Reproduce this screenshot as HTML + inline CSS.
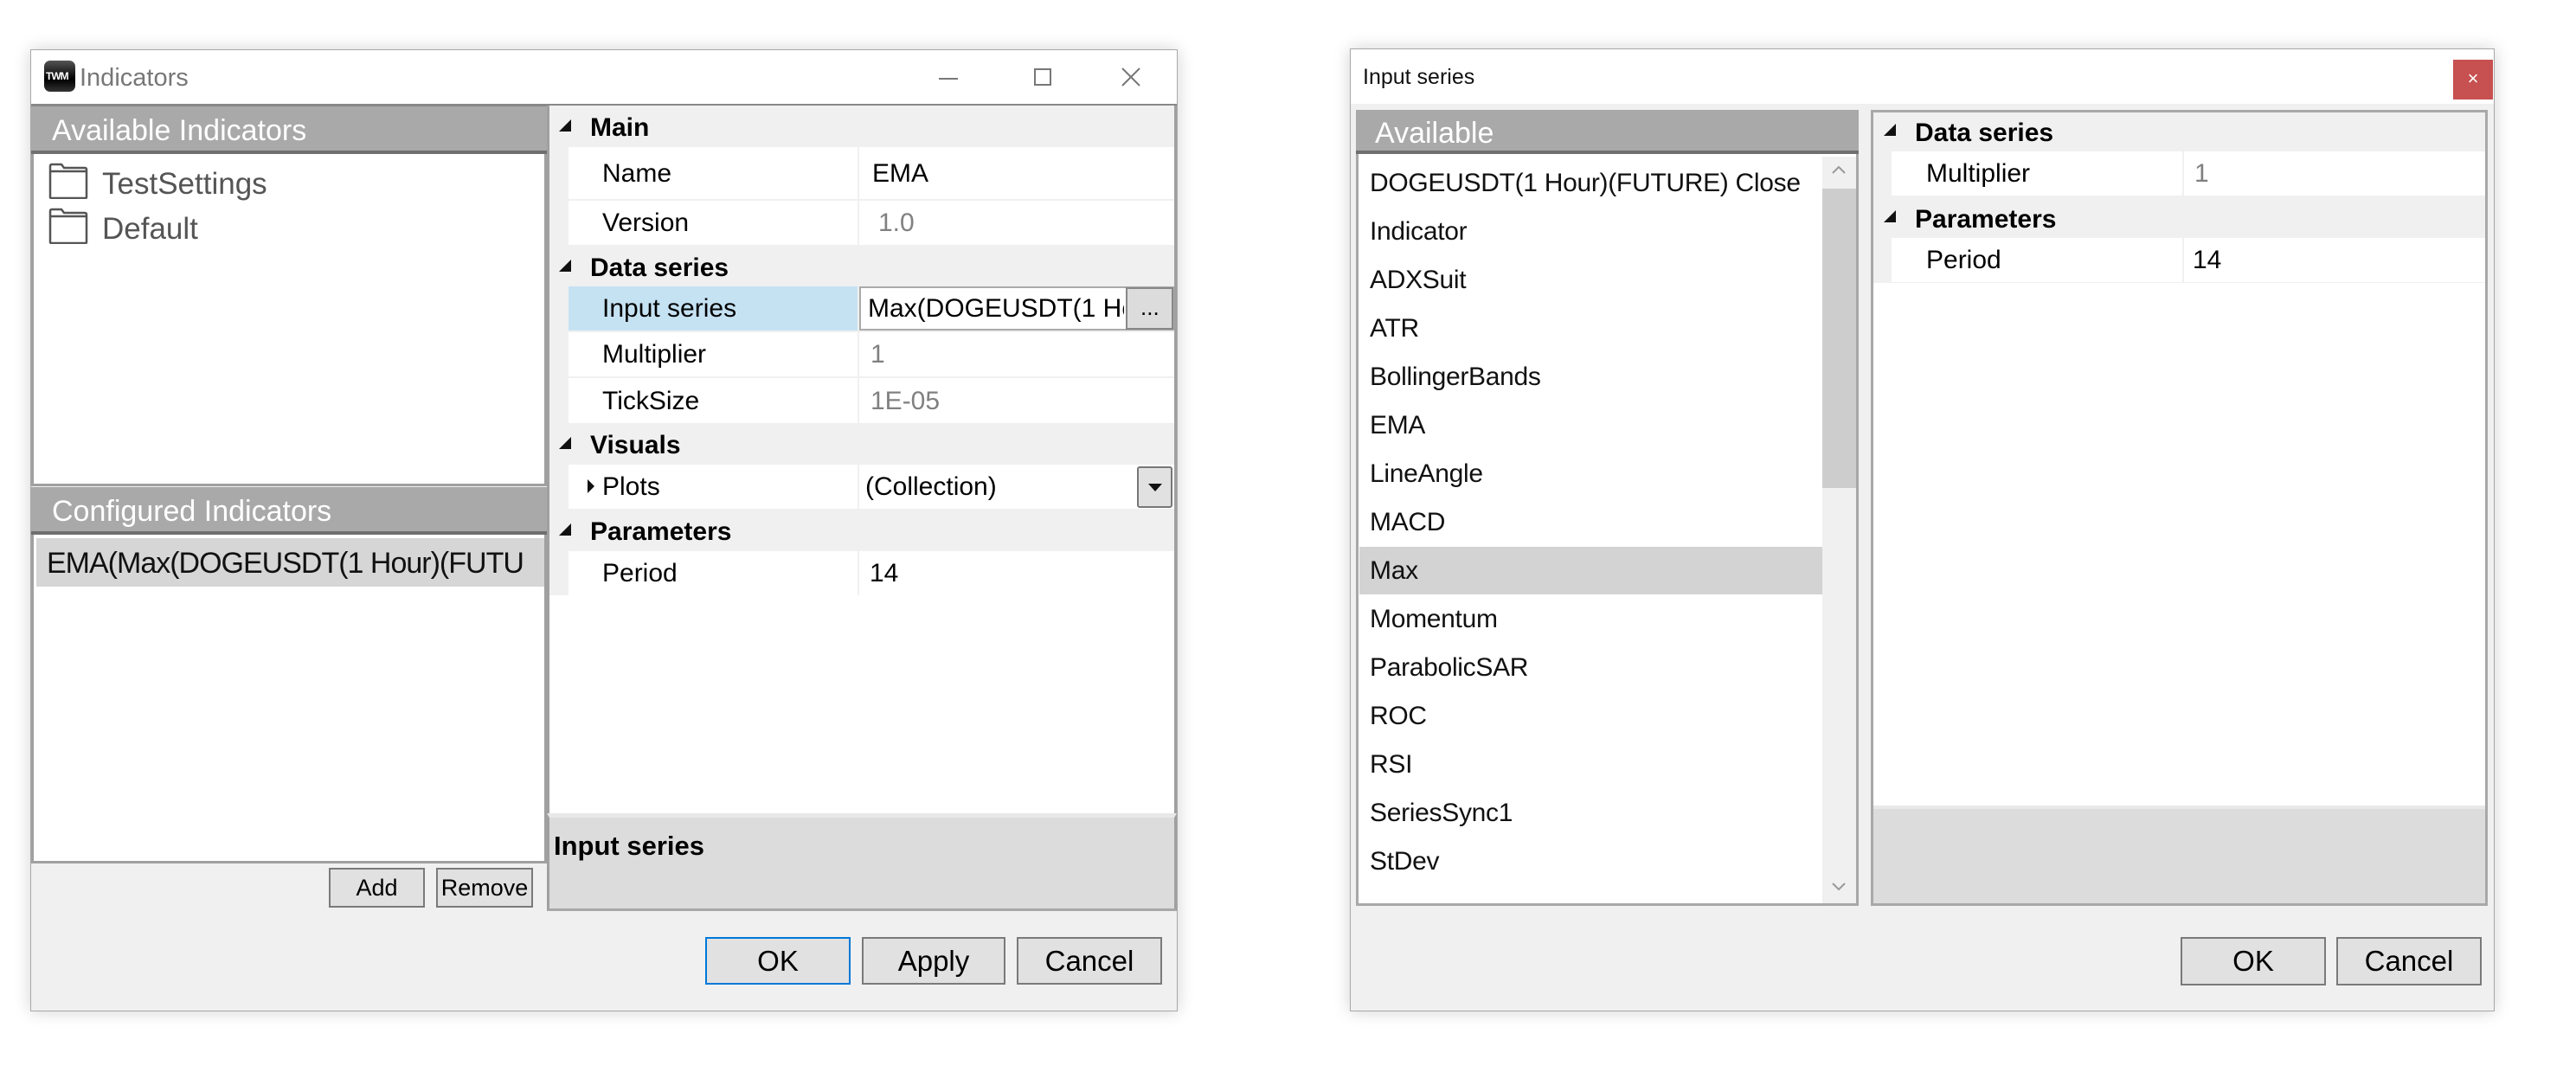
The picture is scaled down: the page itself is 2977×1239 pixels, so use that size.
<!DOCTYPE html>
<html><head><meta charset="utf-8"><style>
*{box-sizing:border-box;margin:0;padding:0}
body{width:2977px;height:1239px;background:#fff;position:relative;overflow:hidden;font-family:"Liberation Sans",sans-serif;color:#000}
.a{position:absolute}
.win{position:absolute;background:#f0f0f0;border:1px solid #a8a8a8;box-shadow:0 0 18px rgba(0,0,0,.18)}
.t{position:absolute;white-space:nowrap;line-height:1}
.hdr{position:absolute;background:#a9a9a9;color:#fff;font-size:34px;border-bottom:4px solid #6f6f6f}
.row{position:absolute;background:#fff}
.btn{position:absolute;background:#e1e1e1;border:2px solid #7a7a7a;font-size:33px;display:flex;align-items:center;justify-content:center}
.tri{position:absolute;width:0;height:0;border-left:14px solid transparent;border-bottom:14px solid #111}
.cat{font-weight:bold;font-size:30px}
.lab{font-size:30px}
.gr{color:#808080}
</style></head><body>

<!-- LEFT WINDOW -->
<div class="win" style="left:35px;top:57px;width:1326px;height:1112px"></div>
<div class="a" style="left:36px;top:58px;width:1324px;height:64px;background:#fff"></div>
<div class="a" style="left:51px;top:70px;width:36px;height:36px;border-radius:7px;background:linear-gradient(#555,#000 60%,#333)"></div>
<div class="t" style="left:53px;top:82px;font-size:12px;color:#fff;font-weight:bold;letter-spacing:-1px">TWM</div>
<div class="t" style="left:92px;top:76px;font-size:29px;color:#777">Indicators</div>
<div class="a" style="left:1085px;top:90px;width:22px;height:2px;background:#777"></div>
<div class="a" style="left:1195px;top:79px;width:20px;height:20px;border:2px solid #777"></div>
<svg class="a" style="left:1296px;top:78px" width="22" height="22"><path d="M1 1L21 21M21 1L1 21" stroke="#777" stroke-width="2"/></svg>
<div class="a" style="left:36px;top:120px;width:1324px;height:3px;background:#888"></div>

<!-- left panel -->
<div class="hdr" style="left:36px;top:123px;width:596px;height:55px"><span class="t" style="left:24px;top:11px">Available Indicators</span></div>
<div class="a" style="left:36px;top:178px;width:596px;height:384px;background:#fff;border:3px solid #a0a0a0;border-top:none"></div>
<svg class="a" style="left:56px;top:188px" width="46" height="42"><path d="M2 40V4Q2 2 4 2H15L18 6H42Q44 6 44 8V40Q44 41 42 41H4Q2 41 2 40ZM2 10H44" fill="none" stroke="#555" stroke-width="2.5"/></svg>
<svg class="a" style="left:56px;top:240px" width="46" height="42"><path d="M2 40V4Q2 2 4 2H15L18 6H42Q44 6 44 8V40Q44 41 42 41H4Q2 41 2 40ZM2 10H44" fill="none" stroke="#555" stroke-width="2.5"/></svg>
<div class="t" style="left:118px;top:195px;font-size:35px;color:#555">TestSettings</div>
<div class="t" style="left:118px;top:247px;font-size:35px;color:#555">Default</div>
<div class="hdr" style="left:36px;top:563px;width:596px;height:55px"><span class="t" style="left:24px;top:11px">Configured Indicators</span></div>
<div class="a" style="left:36px;top:618px;width:596px;height:380px;background:#fff;border:3px solid #a0a0a0;border-top:none"></div>
<div class="a" style="left:42px;top:622px;width:587px;height:56px;background:#d6d6d6"></div>
<div class="t" style="left:54px;top:634px;font-size:34px;color:#111;letter-spacing:-1px">EMA(Max(DOGEUSDT(1 Hour)(FUTU</div>
<div class="btn" style="left:380px;top:1003px;width:111px;height:46px;font-size:27px">Add</div>
<div class="btn" style="left:504px;top:1003px;width:112px;height:46px;font-size:27px">Remove</div>

<!-- property grid -->
<div class="a" style="left:632px;top:122px;width:728px;height:931px;background:#fff;border-left:3px solid #a0a0a0;border-right:3px solid #a0a0a0"></div>
<div class="a" style="left:635px;top:122px;width:722px;height:566px;background:#f0f0f0"></div>
<div class="tri" style="left:646px;top:138px"></div><div class="t cat" style="left:682px;top:133px">Main</div>
<div class="row" style="left:657px;top:170px;width:700px;height:60px"></div>
<div class="row" style="left:657px;top:232px;width:700px;height:51px"></div>
<div class="tri" style="left:646px;top:300px"></div><div class="t cat" style="left:682px;top:295px">Data series</div>
<div class="row" style="left:657px;top:331px;width:334px;height:51px;background:#c5e2f3"></div>
<div class="row" style="left:993px;top:331px;width:364px;height:51px;border:2px solid #aaa"></div>
<div class="a" style="left:1301px;top:332px;width:55px;height:49px;background:#dcdcdc;border:2px solid #888"></div>
<div class="t" style="left:1318px;top:342px;font-size:26px">...</div>
<div class="row" style="left:657px;top:384px;width:700px;height:51px"></div>
<div class="row" style="left:657px;top:437px;width:700px;height:52px"></div>
<div class="tri" style="left:646px;top:505px"></div><div class="t cat" style="left:682px;top:500px">Visuals</div>
<div class="row" style="left:657px;top:537px;width:700px;height:51px"></div>
<div class="tri" style="left:646px;top:605px"></div><div class="t cat" style="left:682px;top:600px">Parameters</div>
<div class="row" style="left:657px;top:637px;width:700px;height:51px"></div>
<div class="a" style="left:991px;top:170px;width:2px;height:518px;background:#f0f0f0"></div>
<div class="t lab" style="left:696px;top:186px">Name</div><div class="t lab" style="left:1008px;top:186px">EMA</div>
<div class="t lab" style="left:696px;top:243px">Version</div><div class="t lab gr" style="left:1015px;top:243px">1.0</div>
<div class="t lab" style="left:696px;top:342px">Input series</div>
<div class="a" style="left:1003px;top:340px;width:296px;height:34px;overflow:hidden"><span class="t lab" style="left:0;top:2px">Max(DOGEUSDT(1 Hour)</span></div>
<div class="t lab" style="left:696px;top:395px">Multiplier</div><div class="t lab gr" style="left:1006px;top:395px">1</div>
<div class="t lab" style="left:696px;top:449px">TickSize</div><div class="t lab gr" style="left:1006px;top:449px">1E-05</div>
<div class="a" style="left:679px;top:554px;border-top:8px solid transparent;border-bottom:8px solid transparent;border-left:8px solid #111"></div>
<div class="t lab" style="left:696px;top:548px">Plots</div><div class="t lab" style="left:1000px;top:548px">(Collection)</div>
<div class="a" style="left:1314px;top:539px;width:41px;height:48px;background:#e1e1e1;border:2px solid #777;border-radius:3px"></div>
<div class="a" style="left:1327px;top:559px;border-left:8px solid transparent;border-right:8px solid transparent;border-top:9px solid #111"></div>
<div class="t lab" style="left:696px;top:648px">Period</div><div class="t lab" style="left:1005px;top:648px">14</div>
<div class="a" style="left:632px;top:940px;width:728px;height:113px;background:#dcdcdc;border-top:5px solid #e8e8e8;border-bottom:3px solid #a8a8a8;border-left:3px solid #a0a0a0;border-right:3px solid #a0a0a0"></div>
<div class="t cat" style="left:640px;top:962px;font-size:31px">Input series</div>

<div class="btn" style="left:815px;top:1083px;width:168px;height:55px;border-color:#0078d7">OK</div>
<div class="btn" style="left:996px;top:1083px;width:166px;height:55px">Apply</div>
<div class="btn" style="left:1175px;top:1083px;width:168px;height:55px">Cancel</div>

<!-- RIGHT WINDOW -->
<div class="win" style="left:1560px;top:56px;width:1323px;height:1113px"></div>
<div class="a" style="left:1561px;top:57px;width:1321px;height:63px;background:#fff"></div>
<div class="t" style="left:1575px;top:77px;font-size:25px;color:#111">Input series</div>
<div class="a" style="left:2835px;top:69px;width:46px;height:46px;background:#c75050;color:#fff;font-size:22px;text-align:center;line-height:44px">×</div>

<div class="hdr" style="left:1567px;top:127px;width:581px;height:51px"><span class="t" style="left:22px;top:10px;font-size:34px">Available</span></div>
<div class="a" style="left:1567px;top:178px;width:581px;height:869px;background:#fff;border:3px solid #a8a8a8;border-top:none"></div>
<div class="a" style="left:2106px;top:181px;width:39px;height:863px;background:#f0f0f0"></div>
<div class="a" style="left:2106px;top:218px;width:39px;height:346px;background:#cdcdcd"></div>
<svg class="a" style="left:2116px;top:190px" width="18" height="12"><path d="M2 10L9 3L16 10" fill="none" stroke="#999" stroke-width="2"/></svg>
<svg class="a" style="left:2116px;top:1019px" width="18" height="12"><path d="M2 2L9 9L16 2" fill="none" stroke="#999" stroke-width="2"/></svg>
<div class="a" style="left:1571px;top:632px;width:535px;height:55px;background:#d3d3d3"></div>
<div class="a" style="left:1583px;top:184px;font-size:30px;line-height:56px;color:#111;white-space:nowrap;letter-spacing:-0.3px">
DOGEUSDT(1 Hour)(FUTURE) Close<br>Indicator<br>ADXSuit<br>ATR<br>BollingerBands<br>EMA<br>LineAngle<br>MACD<br>Max<br>Momentum<br>ParabolicSAR<br>ROC<br>RSI<br>SeriesSync1<br>StDev</div>
<div class="a" style="left:1567px;top:1047px;width:581px;height:20px;background:#f0f0f0"></div>
<div class="a" style="left:1567px;top:1044px;width:581px;height:3px;background:#a8a8a8"></div>

<div class="a" style="left:2162px;top:127px;width:713px;height:920px;background:#fff;border:3px solid #a8a8a8"></div>
<div class="a" style="left:2165px;top:130px;width:707px;height:197px;background:#f0f0f0"></div>
<div class="tri" style="left:2177px;top:143px"></div><div class="t cat" style="left:2213px;top:139px">Data series</div>
<div class="row" style="left:2186px;top:175px;width:686px;height:51px"></div>
<div class="tri" style="left:2177px;top:243px"></div><div class="t cat" style="left:2213px;top:239px">Parameters</div>
<div class="row" style="left:2186px;top:275px;width:686px;height:51px"></div>
<div class="a" style="left:2522px;top:175px;width:2px;height:152px;background:#f0f0f0"></div>
<div class="t lab" style="left:2226px;top:186px">Multiplier</div><div class="t lab gr" style="left:2536px;top:186px">1</div>
<div class="t lab" style="left:2226px;top:286px">Period</div><div class="t lab" style="left:2534px;top:286px">14</div>
<div class="a" style="left:2165px;top:931px;width:707px;height:113px;background:#dcdcdc;border-top:4px solid #e8e8e8"></div>

<div class="btn" style="left:2520px;top:1083px;width:168px;height:56px">OK</div>
<div class="btn" style="left:2700px;top:1083px;width:168px;height:56px">Cancel</div>
</body></html>
